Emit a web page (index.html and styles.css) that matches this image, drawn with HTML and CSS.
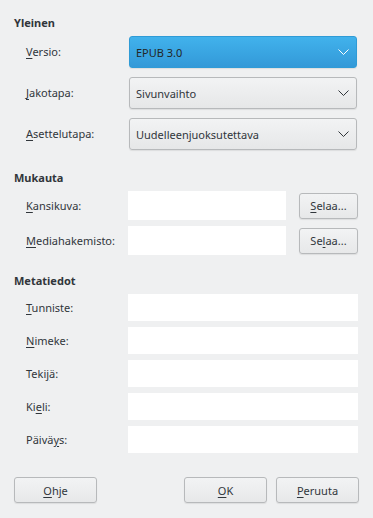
FILE: index.html
```html
<!DOCTYPE html>
<html lang="fi">
<head>
    <meta charset="UTF-8">
    <title>EPUB-vienti</title>
    <link rel="stylesheet" href="styles.css">
</head>
<body>
    <div class="dialog">
        <div class="section">
            <div class="section-title">Yleinen</div>
            <div class="form form-combos">
                <label class="label"><u>V</u>ersio:</label>
                <div class="combo combo-active">
                    <span>EPUB 3.0</span>
                    <svg class="chevron" width="11" height="6" viewBox="0 0 11 6"><path d="M0.5 0.5 L5.5 5.5 L10.5 0.5" fill="none" stroke="currentColor" stroke-width="1"/></svg>
                </div>
                <label class="label"><u>J</u>akotapa:</label>
                <div class="combo">
                    <span>Sivunvaihto</span>
                    <svg class="chevron" width="11" height="6" viewBox="0 0 11 6"><path d="M0.5 0.5 L5.5 5.5 L10.5 0.5" fill="none" stroke="currentColor" stroke-width="1"/></svg>
                </div>
                <label class="label"><u>A</u>settelutapa:</label>
                <div class="combo">
                    <span>Uudelleenjuoksutettava</span>
                    <svg class="chevron" width="11" height="6" viewBox="0 0 11 6"><path d="M0.5 0.5 L5.5 5.5 L10.5 0.5" fill="none" stroke="currentColor" stroke-width="1"/></svg>
                </div>
            </div>
        </div>

        <div class="section section-custom">
            <div class="section-title">Mukauta</div>
            <div class="form form-browse">
                <label class="label"><u>K</u>ansikuva:</label>
                <div class="browse-row">
                    <div class="field"></div>
                    <button class="btn btn-small"><u>S</u>elaa...</button>
                </div>
                <label class="label"><u>M</u>ediahakemisto:</label>
                <div class="browse-row">
                    <div class="field"></div>
                    <button class="btn btn-small">Se<u>l</u>aa...</button>
                </div>
            </div>
        </div>

        <div class="section section-meta">
            <div class="section-title">Metatiedot</div>
            <div class="form form-meta">
                <label class="label"><u>T</u>unniste:</label>
                <div class="field"></div>
                <label class="label"><u>N</u>imeke:</label>
                <div class="field"></div>
                <label class="label">Teki<u>j</u>ä:</label>
                <div class="field"></div>
                <label class="label">Ki<u>e</u>li:</label>
                <div class="field"></div>
                <label class="label">Päivä<u>y</u>s:</label>
                <div class="field"></div>
            </div>
        </div>

        <div class="button-bar">
            <button class="btn"><u>O</u>hje</button>
            <div class="spacer"></div>
            <button class="btn"><u>O</u>K</button>
            <button class="btn"><u>P</u>eruuta</button>
        </div>
    </div>
</body>
</html>
```

FILE: styles.css
```css
* {
    margin: 0;
    padding: 0;
    box-sizing: border-box;
}

body {
    font-family: "Noto Sans", "DejaVu Sans", sans-serif;
    font-size: 11px;
    color: #31363b;
    background: #eff0f1;
    width: 373px;
    height: 518px;
    overflow: hidden;
}

u {
    text-decoration: underline;
    text-underline-offset: 2px;
}

.dialog {
    padding: 16px 15px 0 14px;
}

.section-title {
    font-weight: bold;
    line-height: 14px;
    height: 14px;
    margin-bottom: 6px;
}

.section-custom {
    margin-top: 21px;
}

.section-meta {
    margin-top: 19px;
}

.form {
    display: grid;
    grid-template-columns: 102px 1fr;
    padding-left: 12px;
    align-items: center;
}

.form-combos {
    row-gap: 9px;
    grid-template-columns: 103px 1fr;
    padding-right: 1px;
}

.form-browse {
    row-gap: 6px;
}

.form-meta {
    row-gap: 6px;
}

.label {
    line-height: 16px;
}

.combo {
    height: 32px;
    display: flex;
    align-items: center;
    justify-content: space-between;
    padding: 0 7px 0 6px;
    border: 1px solid #b7b9bb;
    border-radius: 3px;
    background: linear-gradient(#f2f3f4, #e6e7e8);
    box-shadow: 0 1px 1px rgba(0, 0, 0, 0.08);
}

.combo-active {
    border-color: #2f9bd6;
    background: linear-gradient(#41b2ec, #3399d8);
    color: #232627;
}

.combo-active .chevron {
    color: #ffffff;
}

.chevron {
    color: #31363b;
}

.field {
    background: #ffffff;
    height: 27px;
}

.form-browse .field {
    height: 29px;
    flex: 1;
}

.browse-row {
    display: flex;
    align-items: center;
    gap: 13px;
}

.btn {
    font-family: inherit;
    font-size: 11px;
    color: #31363b;
    height: 26px;
    width: 83px;
    border: 1px solid #b7b9bb;
    border-radius: 3px;
    background: linear-gradient(#f2f3f4, #e7e8e9);
    box-shadow: 0 1px 1px rgba(0, 0, 0, 0.08);
}

.btn-small {
    width: 59px;
}

.button-bar {
    display: flex;
    gap: 9px;
    margin-top: 24px;
    margin-right: -1px;
}

.spacer {
    flex: 1;
}
```
